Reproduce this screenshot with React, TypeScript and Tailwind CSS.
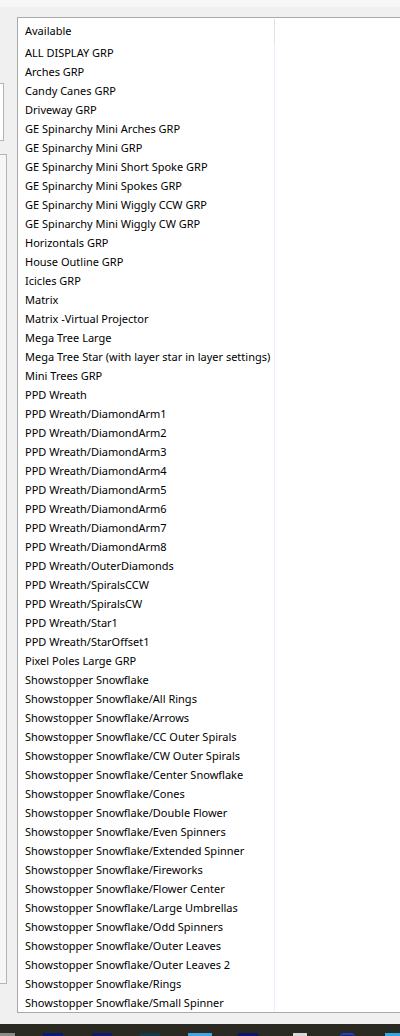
const items = [
  'ALL DISPLAY GRP',
  'Arches GRP',
  'Candy Canes GRP',
  'Driveway GRP',
  'GE Spinarchy Mini Arches GRP',
  'GE Spinarchy Mini GRP',
  'GE Spinarchy Mini Short Spoke GRP',
  'GE Spinarchy Mini Spokes GRP',
  'GE Spinarchy Mini Wiggly CCW GRP',
  'GE Spinarchy Mini Wiggly CW GRP',
  'Horizontals GRP',
  'House Outline GRP',
  'Icicles GRP',
  'Matrix',
  'Matrix -Virtual Projector',
  'Mega Tree Large',
  'Mega Tree Star (with layer star in layer settings)',
  'Mini Trees GRP',
  'PPD Wreath',
  'PPD Wreath/DiamondArm1',
  'PPD Wreath/DiamondArm2',
  'PPD Wreath/DiamondArm3',
  'PPD Wreath/DiamondArm4',
  'PPD Wreath/DiamondArm5',
  'PPD Wreath/DiamondArm6',
  'PPD Wreath/DiamondArm7',
  'PPD Wreath/DiamondArm8',
  'PPD Wreath/OuterDiamonds',
  'PPD Wreath/SpiralsCCW',
  'PPD Wreath/SpiralsCW',
  'PPD Wreath/Star1',
  'PPD Wreath/StarOffset1',
  'Pixel Poles Large GRP',
  'Showstopper Snowflake',
  'Showstopper Snowflake/All Rings',
  'Showstopper Snowflake/Arrows',
  'Showstopper Snowflake/CC Outer Spirals',
  'Showstopper Snowflake/CW Outer Spirals',
  'Showstopper Snowflake/Center Snowflake',
  'Showstopper Snowflake/Cones',
  'Showstopper Snowflake/Double Flower',
  'Showstopper Snowflake/Even Spinners',
  'Showstopper Snowflake/Extended Spinner',
  'Showstopper Snowflake/Fireworks',
  'Showstopper Snowflake/Flower Center',
  'Showstopper Snowflake/Large Umbrellas',
  'Showstopper Snowflake/Odd Spinners',
  'Showstopper Snowflake/Outer Leaves',
  'Showstopper Snowflake/Outer Leaves 2',
  'Showstopper Snowflake/Rings',
  'Showstopper Snowflake/Small Spinner',
];

// tops of the pinned taskbar icons, only a few pixels show
const taskbarIcons = [
  { ml: 'ml-0', w: 'w-[15px]', c: 'bg-[#8a8a8a]' },
  { ml: 'ml-[28px]', w: 'w-[20px]', c: 'bg-[#0b1a78]' },
  { ml: 'ml-[29px]', w: 'w-[20px]', c: 'bg-[#101a6e]' },
  { ml: 'ml-[28px]', w: 'w-[20px]', c: 'bg-[#123a4a]' },
  { ml: 'ml-[28px]', w: 'w-[24px]', c: 'bg-[#3ea6e6]' },
  { ml: 'ml-[26px]', w: 'w-[20px]', c: 'bg-[#0c1470]' },
  { ml: 'ml-[35px]', w: 'w-[14px]', c: 'bg-[#d8d8d8]' },
  { ml: 'ml-[33px]', w: 'w-[15px]', c: 'border-t-2 border-[#1a3de0] rounded-t-full' },
  { ml: 'ml-[30px]', w: 'w-[15px]', c: 'bg-[#2fa8e8]' },
];

export default function App() {
  return (
    <div className="w-[400px] h-[1036px] bg-[#f0f0f0] flex flex-col overflow-hidden text-black text-[11px] font-['Segoe_UI','Noto_Sans',sans-serif]">
      <div className="h-[7px] shrink-0 bg-[#f7f7f7]" />

      <div className="flex h-[1017px] shrink-0">
        {/* clipped panels of the left pane */}
        <div className="w-[17px] shrink-0 flex flex-col">
          <div className="mt-[76px] h-[58px] w-[4px] bg-white border border-l-0 border-[#b4b4b4]" />
          <div className="mt-[13px] h-[830px] w-[7px] bg-[#f6f6f6] border border-l-0 border-[#b4b4b4]" />
        </div>

        {/* list view */}
        <div className="flex-1 pt-[10px]">
          <div className="w-[400px] h-[996px] bg-white border border-r-0 border-[#a9a9a9] flex">
            <div className="w-[257px] shrink-0 flex flex-col">
              <div className="h-[25px] flex">
                <div className="flex-1 pl-[7px] leading-[25px]">Available</div>
                <div className="w-px mt-px bg-[#e2e2e2]" />
              </div>
              <div className="flex-1 border-r border-[#e6effb]">
                {items.map((name) => (
                  <div key={name} className="h-[19px] pl-[7px] leading-[19px] whitespace-nowrap">
                    {name}
                  </div>
                ))}
              </div>
            </div>
          </div>
        </div>
      </div>

      {/* taskbar */}
      <div className="flex-1 bg-[#2b2a22] flex items-start pt-[9px]">
        {taskbarIcons.map((t, i) => (
          <div key={i} className={`h-[4px] ${t.ml} ${t.w} ${t.c}`} />
        ))}
      </div>
    </div>
  );
}
